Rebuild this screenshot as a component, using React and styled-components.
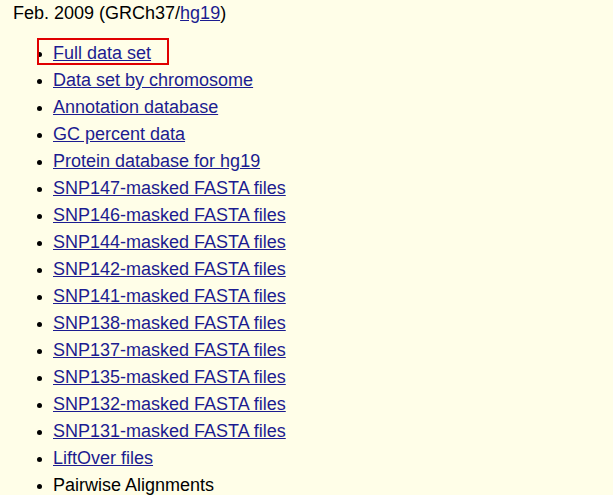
import React from 'react';
import styled, { createGlobalStyle } from 'styled-components';

const GlobalStyle = createGlobalStyle`
  html, body {
    margin: 0;
    padding: 0;
    background: #fffee8;
  }
  body {
    font-family: "Liberation Sans", Arial, sans-serif;
    color: #000;
  }
`;

const items = [
  { label: 'Full data set', marked: true },
  { label: 'Data set by chromosome' },
  { label: 'Annotation database' },
  { label: 'GC percent data' },
  { label: 'Protein database for hg19' },
  { label: 'SNP147-masked FASTA files' },
  { label: 'SNP146-masked FASTA files' },
  { label: 'SNP144-masked FASTA files' },
  { label: 'SNP142-masked FASTA files' },
  { label: 'SNP141-masked FASTA files' },
  { label: 'SNP138-masked FASTA files' },
  { label: 'SNP137-masked FASTA files' },
  { label: 'SNP135-masked FASTA files' },
  { label: 'SNP132-masked FASTA files' },
  { label: 'SNP131-masked FASTA files' },
  { label: 'LiftOver files' },
  { label: 'Pairwise Alignments', plain: true },
];

const App = () => {
  return (
    <Page>
      <GlobalStyle />
      <Heading>
        Feb. 2009 (GRCh37/<Link href="#">hg19</Link>)
      </Heading>
      <List>
        {items.map((item) => (
          <Item key={item.label} $marked={item.marked}>
            {item.plain ? item.label : <Link href="#">{item.label}</Link>}
          </Item>
        ))}
      </List>
    </Page>
  );
};

const Page = styled.div`
  padding: 0 0 0 13px;
  font-size: 18px;
  line-height: 27px;
  height: 495px;
  overflow: hidden;
`;

const Heading = styled.div`
  margin: 0;
`;

const Link = styled.a`
  color: #1c1c90;
  text-decoration: underline;

  &:visited {
    color: #1c1c90;
  }
`;

const List = styled.ul`
  margin: 13px 0 0;
  padding-left: 40px;
  list-style: disc;

  li::marker {
    font-size: 15px;
  }
`;

const Item = styled.li`
  position: relative;

  &::after {
    content: '';
    display: ${(p) => (p.$marked ? 'block' : 'none')};
    position: absolute;
    left: -16px;
    top: -2px;
    width: 128px;
    height: 23px;
    border: 2px solid #e00000;
    pointer-events: none;
  }
`;

export default App;
